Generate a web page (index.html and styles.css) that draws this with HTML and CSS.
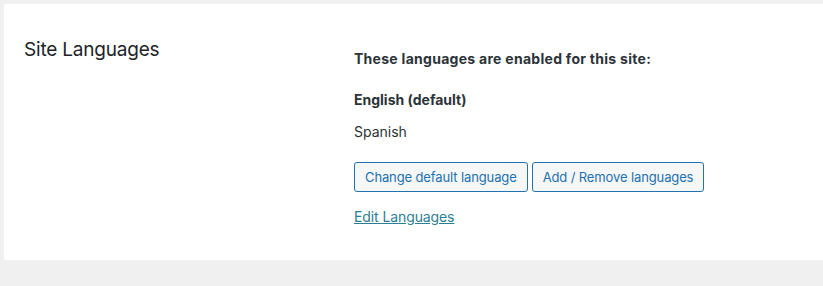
FILE: index.html
```html
<!DOCTYPE html>
<html lang="en">
<head>
<meta charset="utf-8">
<title>Site Languages</title>
<link rel="stylesheet" href="styles.css">
</head>
<body>
<div class="panel">
  <div class="col-label">
    <h2 class="title">Site Languages</h2>
  </div>
  <div class="col-main">
    <p class="intro">These languages are enabled for this site:</p>
    <p class="lang lang-default">English (default)</p>
    <p class="lang">Spanish</p>
    <div class="actions">
      <button class="btn" type="button">Change default language</button>
      <button class="btn" type="button">Add / Remove languages</button>
    </div>
    <a class="edit-link" href="#">Edit Languages</a>
  </div>
</div>
</body>
</html>
```

FILE: styles.css
```css
html, body {
  margin: 0;
  padding: 0;
}
body {
  background: #f0f0f1;
  font-family: Inter, "Noto Sans", "Liberation Sans", sans-serif;
  color: #1d2327;
  padding: 4px 0 0 4px;
}
.panel {
  background: #fff;
  height: 256px;
  display: flex;
  box-sizing: border-box;
  padding: 0 0 0 20px;
}
.col-label {
  width: 330px;
  flex: none;
}
.title {
  margin: 33px 0 0;
  font-size: 19px;
  letter-spacing: -0.2px;
  line-height: 26px;
  font-weight: 400;
  color: #1d2327;
}
.col-main {
  display: flex;
  flex-direction: column;
  align-items: flex-start;
  font-size: 14px;
  line-height: 20px;
  color: #2c3338;
}
.intro {
  margin: 45px 0 0;
  font-weight: 700;
  letter-spacing: 0.28px;
}
.lang {
  margin: 12px 0 0;
}
.lang-default {
  margin-top: 21px;
  font-weight: 700;
}
.actions {
  display: flex;
  gap: 4px;
  margin-top: 20px;
}
.btn {
  font-family: inherit;
  font-size: 13px;
  letter-spacing: -0.12px;
  line-height: 28px;
  height: 30px;
  padding: 0 10px;
  color: #2271b1;
  background: #f6f7f7;
  border: 1px solid #2271b1;
  border-radius: 3px;
  box-sizing: border-box;
  cursor: pointer;
}
.edit-link {
  margin-top: 15px;
  color: #2b7e93;
  text-decoration: underline;
  font-size: 14px;
  letter-spacing: -0.1px;
}
```
